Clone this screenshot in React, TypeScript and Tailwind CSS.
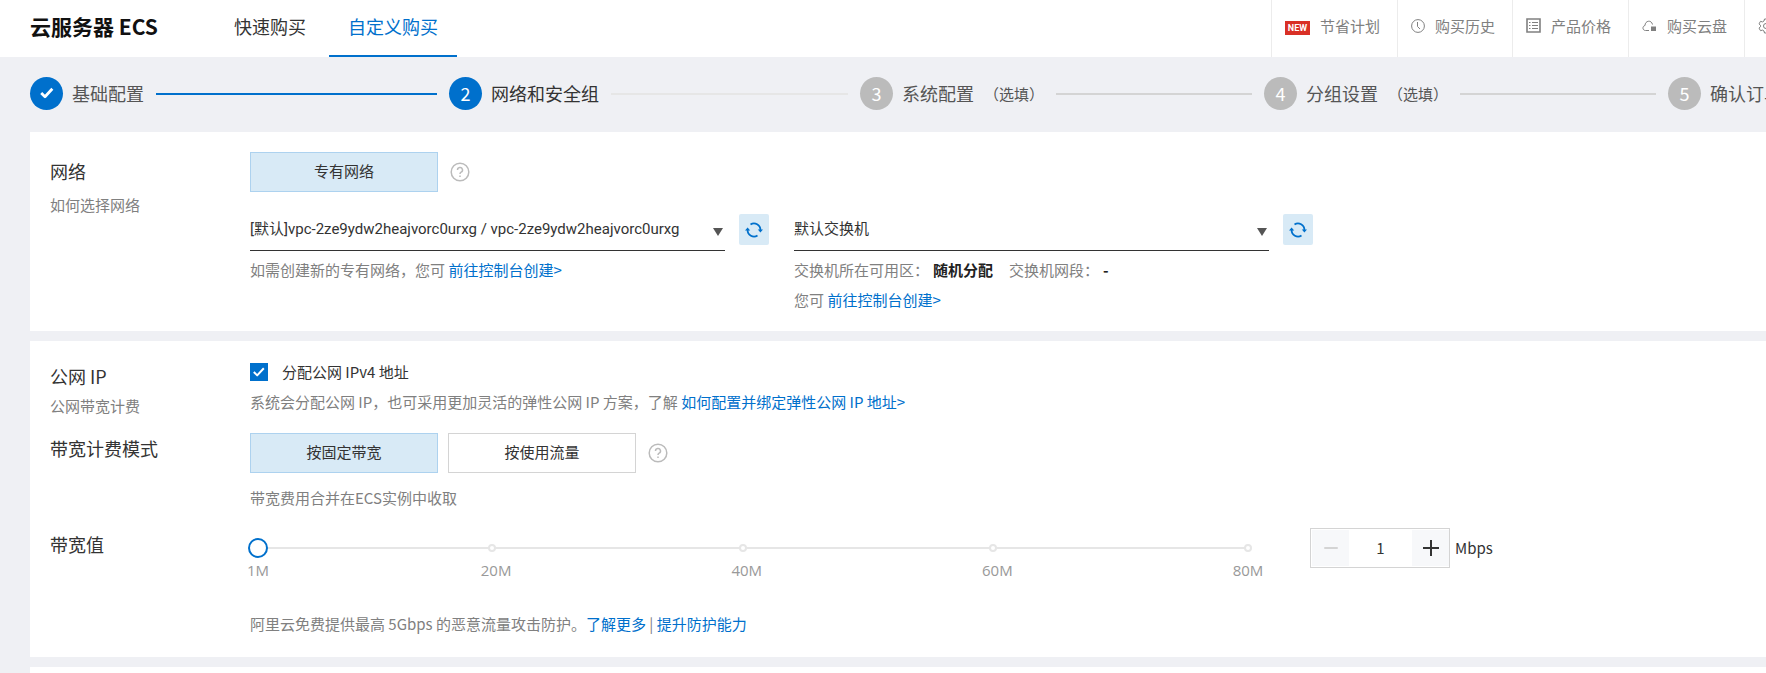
import { useState } from "react";
import type { ReactNode } from "react";

const MARKS = [1, 20, 40, 60, 80];
const MIN = 1;
const MAX = 80;

export default function App() {
  const [assignIp, setAssignIp] = useState(true);
  const [billing, setBilling] = useState("fixed");
  const [bandwidth, setBandwidth] = useState(1);

  const change = (n: number) => setBandwidth(Math.min(MAX, Math.max(MIN, n)));

  return (
    <div className="flex min-h-screen flex-col overflow-hidden bg-[#eff0f4] font-['Noto_Sans_CJK_SC',sans-serif] text-[15px] leading-[30px] text-[#333]">
      <header className="flex h-[57px] bg-white pl-[30px]">
        <h1 className="w-[185px] shrink-0 self-center pb-1.5 text-[21px] font-bold text-[#111]">
          云服务器 ECS
        </h1>
        <nav className="flex gap-1 text-lg">
          <a href="#quick" className="px-[19px] pt-[11px] leading-[30px]">
            快速购买
          </a>
          <a
            href="#custom"
            className="border-b-2 border-[#0070cc] px-[19px] pt-[11px] leading-[30px] text-[#0070cc]"
          >
            自定义购买
          </a>
        </nav>
        <nav className="ml-auto flex w-[495px] shrink-0 overflow-hidden text-[#808080]">
          <TopLink
            label="节省计划"
            icon={
              <span className="mt-1 w-[25px] bg-[#d93026] text-center font-['Roboto'] text-[9px] leading-[14px] font-bold text-white">
                NEW
              </span>
            }
          />
          <TopLink label="购买历史" icon={<ClockIcon />} />
          <TopLink label="产品价格" icon={<ListIcon />} />
          <TopLink label="购买云盘" icon={<CloudIcon />} />
          <TopLink label="" icon={<GearIcon />} />
        </nav>
      </header>

      <ol className="grid h-[75px] grid-cols-[419fr_411fr_404fr_404fr_98fr] items-center pb-0.5 pl-[30px]">
        <Step num={1} title="基础配置" state="done" />
        <Step num={2} title="网络和安全组" state="active" />
        <Step num={3} title="系统配置" state="todo" optional />
        <Step num={4} title="分组设置" state="todo" optional />
        <Step num={5} title="确认订单" state="todo" last />
      </ol>

      <main className="flex flex-1 flex-col gap-2.5 pl-[30px]">
        {/* 网络 */}
        <section className="flex bg-white pt-5 pb-4 pl-5">
          <div className="w-[200px] shrink-0">
            <h2 className="text-lg leading-[38px]">网络</h2>
            <a href="#network-help" className="text-[#808080]">
              如何选择网络
            </a>
          </div>
          <div>
            <div className="flex items-center gap-2.5">
              <Choice checked onClick={() => {}}>
                专有网络
              </Choice>
              <HelpIcon />
            </div>
            <div className="mt-[18px] flex gap-[25px]">
              <div>
                <Picker label="专有网络" value="[默认]vpc-2ze9ydw2heajvorc0urxg / vpc-2ze9ydw2heajvorc0urxg" />
                <p className="pt-1 text-[#808080]">
                  如需创建新的专有网络，您可 <Link>前往控制台创建&gt;</Link>
                </p>
              </div>
              <div>
                <Picker label="交换机" value="默认交换机" />
                <p className="pt-1 text-[#808080]">
                  交换机所在可用区：
                  <b className="mr-4 ml-1 text-[#222]">随机分配</b>
                  交换机网段：<b className="ml-1 text-[#222]">-</b>
                </p>
                <p className="text-[#808080]">
                  您可 <Link>前往控制台创建&gt;</Link>
                </p>
              </div>
            </div>
          </div>
        </section>

        {/* 公网 IP 与带宽 */}
        <section className="bg-white pt-4 pb-[18px] pl-5">
          <div className="flex">
            <div className="w-[200px] shrink-0 pt-1">
              <h2 className="text-lg leading-[30px]">公网 IP</h2>
              <a href="#bandwidth-help" className="text-[#808080]">
                公网带宽计费
              </a>
            </div>
            <div>
              <label className="flex items-center">
                <input
                  type="checkbox"
                  checked={assignIp}
                  onChange={(e) => setAssignIp(e.target.checked)}
                  className="size-[18px] appearance-none border border-[#0070cc] bg-white checked:bg-[#0070cc]"
                />
                <CheckIcon className="pointer-events-none -ml-[18px] size-[18px] text-white" />
                <span className="ml-[14px]">分配公网 IPv4 地址</span>
              </label>
              <p className="text-[#808080]">
                系统会分配公网 IP，也可采用更加灵活的弹性公网 IP 方案，了解{" "}
                <Link>如何配置并绑定弹性公网 IP 地址&gt;</Link>
              </p>
            </div>
          </div>

          <div className="mt-3 flex">
            <h2 className="w-[200px] shrink-0 text-lg leading-[30px]">带宽计费模式</h2>
            <div>
              <div className="flex items-center gap-2.5">
                <Choice checked={billing === "fixed"} onClick={() => setBilling("fixed")}>
                  按固定带宽
                </Choice>
                <Choice checked={billing === "traffic"} onClick={() => setBilling("traffic")}>
                  按使用流量
                </Choice>
                <HelpIcon />
              </div>
              <p className="mt-2.5 text-[#808080]">带宽费用合并在ECS实例中收取</p>
            </div>
          </div>

          <div className="mt-[15px] flex">
            <h2 className="w-[200px] shrink-0 text-lg leading-8">带宽值</h2>
            <div className="-ml-0.5 w-[1010px] pt-2.5">
              <div className="relative h-5">
                <span className="absolute top-[9px] right-2.5 left-2.5 h-0.5 bg-[#e6e6e6]" />
                {MARKS.slice(1).map((m) => (
                  <span
                    key={m}
                    className={`absolute top-1.5 size-2 rounded-full border-2 border-[#e6e6e6] bg-white ${
                      m === MAX ? "-ml-1" : "-ml-2"
                    }`}
                    style={{ left: markPos(m) }}
                  />
                ))}
                <input
                  type="range"
                  aria-label="带宽值"
                  min={MIN}
                  max={MAX}
                  value={bandwidth}
                  onChange={(e) => change(Number(e.target.value))}
                  className="relative block h-5 w-full appearance-none bg-transparent [&::-webkit-slider-thumb]:size-5 [&::-webkit-slider-thumb]:appearance-none [&::-webkit-slider-thumb]:rounded-full [&::-webkit-slider-thumb]:border-2 [&::-webkit-slider-thumb]:border-[#0070cc] [&::-webkit-slider-thumb]:bg-white"
                />
              </div>
              <div className="relative h-6 font-['Open_Sans',sans-serif] leading-6 text-[#999]">
                {MARKS.map((m) => (
                  <span
                    key={m}
                    className="absolute -translate-x-1/2"
                    style={{ left: markPos(m) }}
                  >
                    {m}M
                  </span>
                ))}
              </div>
            </div>
            <div className="ml-[52px] flex h-10 items-center">
              <div className="flex h-10 w-[140px] border border-[#d4d4d4] py-px pl-px">
                <button
                  type="button"
                  aria-label="减少"
                  disabled={bandwidth <= MIN}
                  onClick={() => change(bandwidth - 1)}
                  className="flex w-[37px] items-center justify-center bg-[#f7f8fa] text-[#333] disabled:text-[#d4d4d4]"
                >
                  <svg
                    viewBox="0 0 16 16"
                    className="size-4"
                    stroke="currentColor"
                    strokeWidth="2"
                    strokeLinecap="round"
                  >
                    <path d="M2 8h12" />
                  </svg>
                </button>
                <input
                  aria-label="带宽"
                  value={bandwidth}
                  onChange={(e) => change(Number(e.target.value) || MIN)}
                  className="w-0 flex-1 text-center outline-none"
                />
                <button
                  type="button"
                  aria-label="增加"
                  onClick={() => change(bandwidth + 1)}
                  className="flex w-[37px] items-center justify-center bg-[#f7f8fa] text-[#333]"
                >
                  <svg viewBox="0 0 16 16" className="size-4" stroke="currentColor" strokeWidth="2">
                    <path d="M0 8h16M8 0v16" />
                  </svg>
                </button>
              </div>
              <span className="ml-[5px]">Mbps</span>
            </div>
          </div>

          <p className="mt-[27px] pl-[200px] text-[#808080]">
            阿里云免费提供最高 5Gbps 的恶意流量攻击防护。<Link>了解更多</Link> |{" "}
            <Link>提升防护能力</Link>
          </p>
        </section>

        <section className="flex-1 bg-white" />
      </main>
    </div>
  );
}

// the range thumb is 20px wide, so its centre runs from 10px to 100% - 10px
function markPos(m: number) {
  const t = (m - MIN) / (MAX - MIN);
  return `calc(${t * 100}% + ${10 - t * 20}px)`;
}

function TopLink({ label, icon }: { label: string; icon: ReactNode }) {
  return (
    <a
      href="#top"
      aria-label={label || "设置"}
      className="flex shrink-0 items-center gap-2.5 border-l border-[#ececec] pr-[17px] pb-1.5 pl-[13px]"
    >
      {icon}
      {label}
    </a>
  );
}

type StepProps = {
  num: number;
  title: string;
  state: "done" | "active" | "todo";
  optional?: boolean;
  last?: boolean;
};

function Step({ num, title, state, optional, last }: StepProps) {
  const line =
    state === "done" ? "bg-[#0070cc]" : state === "active" ? "bg-[#e6e6e6]" : "bg-[#d4d4d4]";
  return (
    <li className="flex min-w-0 items-center whitespace-nowrap">
      <span
        className={`flex size-[33px] shrink-0 items-center justify-center rounded-full pb-0.5 text-lg text-white ${
          state === "todo" ? "bg-[#bbb]" : "bg-[#0070cc]"
        }`}
      >
        {state === "done" ? <CheckIcon className="size-5" bold /> : num}
      </span>
      <span
        className={`ml-[9px] pb-0.5 text-lg ${state === "active" ? "text-[#333]" : "text-[#555]"}`}
      >
        {title}
      </span>
      {optional && <span className="ml-2.5 text-[#555]">（选填）</span>}
      {!last && <span className={`mx-3 h-0.5 flex-1 ${line}`} />}
    </li>
  );
}

function Choice({
  checked,
  onClick,
  children,
}: {
  checked: boolean;
  onClick: () => void;
  children: ReactNode;
}) {
  return (
    <button
      type="button"
      onClick={onClick}
      className={`h-10 w-[188px] border pb-0.5 ${
        checked ? "border-[#add2ef] bg-[#d8eaf6]" : "border-[#d4d4d4] bg-white"
      }`}
    >
      {children}
    </button>
  );
}

function Picker({ label, value }: { label: string; value: string }) {
  return (
    <div className="flex gap-[14px]">
      <div className="relative">
        <select
          aria-label={label}
          className="block h-[41px] w-[475px] appearance-none border-b border-[#333] bg-white pb-0.5 font-['Roboto','Noto_Sans_CJK_SC',sans-serif]"
        >
          <option>{value}</option>
        </select>
        <svg viewBox="0 0 10 8" className="absolute top-[18px] right-0.5 h-2 w-2.5" fill="#555">
          <path d="M0 0h10L5 8z" />
        </svg>
      </div>
      <button
        type="button"
        aria-label="刷新"
        className="mt-1 flex h-[31px] w-[30px] items-center justify-center rounded-xs bg-[#d8eaf6] text-[#0070cc]"
      >
        <RefreshIcon />
      </button>
    </div>
  );
}

function Link({ children }: { children: ReactNode }) {
  return (
    <a href="#console" className="text-[#0070cc]">
      {children}
    </a>
  );
}

function CheckIcon({ className, bold }: { className: string; bold?: boolean }) {
  return (
    <svg
      viewBox="0 0 18 18"
      className={className}
      fill="none"
      stroke="currentColor"
      strokeWidth={bold ? 2.5 : 2}
      strokeLinejoin="round"
    >
      <path d="M3.8 9l3.4 3.4 6.6-7.2" />
    </svg>
  );
}

function RefreshIcon() {
  return (
    <svg viewBox="0 0 18 18" className="size-[18px]" fill="none" stroke="currentColor" strokeWidth="1.8">
      <path d="M5.5 3.5A6.4 6.4 0 0 1 15.4 9M2.6 9a6.4 6.4 0 0 0 9.9 5.5" />
      <path d="M12.8 8.5H18l-2.6 3zM0 9.5h5.2L2.6 6.500z" fill="currentColor" stroke="none" />
    </svg>
  );
}

function HelpIcon() {
  return (
    <svg viewBox="0 0 20 20" className="mx-0.5 size-5" fill="none" stroke="#bbb" strokeWidth="1.5">
      <circle cx="10" cy="10" r="8.8" />
      <path d="M7.500 8a2.5 2.5 0 1 1 3.6 2.2c-.8.4-1.1.8-1.1 1.8M10 13.5V15" />
    </svg>
  );
}

function ClockIcon() {
  return (
    <svg viewBox="0 0 14 14" className="size-3.5" fill="none" stroke="currentColor">
      <circle cx="7" cy="7" r="6.4" />
      <path d="M6.5 3v4.5L9 10" />
    </svg>
  );
}

function ListIcon() {
  return (
    <svg viewBox="0 0 15 15" className="size-[15px]" fill="none" stroke="currentColor">
      <path d="M1 1h13v13H1z" strokeWidth="1.6" />
      <path d="M3 4.5h1.5M6 4.5h6M3 7.5h1.5M6 7.5h6M3 10.5h1.5M6 10.5h6" />
    </svg>
  );
}

function CloudIcon() {
  return (
    <svg viewBox="0 0 15 12" className="h-3 w-[15px]" fill="none" stroke="currentColor">
      <path d="M7 10.5H3.5C.2 10.5.2 6 3 5.5 3 .5 9.5-.5 10.5 4.5" />
      <path d="M9 6.5h5V11H9z" fill="currentColor" stroke="none" />
    </svg>
  );
}

function GearIcon() {
  return (
    <svg viewBox="0 0 16 16" className="size-4" fill="none" stroke="currentColor">
      <path d="M6.500 1h3l.5 2 1.500.9 2-.6 1.500 2.600L13.500 7.300v1.400l1.500 1.400-1.500 2.600-2-.6-1.500.9-.5 2h-3l-.5-2-1.500-.9-2 .6L1 10.100l1.500-1.400V7.300L1 5.900l1.500-2.600 2 .6L6 3z" />
      <circle cx="8" cy="8" r="2.5" />
    </svg>
  );
}
